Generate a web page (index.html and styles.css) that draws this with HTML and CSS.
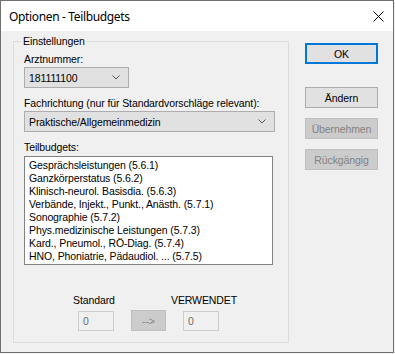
FILE: index.html
```html
<!DOCTYPE html>
<html lang="de">
<head>
    <meta charset="UTF-8">
    <title>Optionen - Teilbudgets</title>
    <link rel="stylesheet" href="styles.css">
</head>
<body>
    <div class="window">
        <div class="titlebar">
            <span class="title">Optionen - Teilbudgets</span>
            <svg class="close" width="11" height="11" viewBox="0 0 11 11">
                <path d="M0.5 0.5 L10.5 10.5 M10.5 0.5 L0.5 10.5" stroke="#000" stroke-width="1" fill="none"/>
            </svg>
        </div>
        <div class="content">
            <div class="group">
                <span class="legend">Einstellungen</span>
                <div class="label">Arztnummer:</div>
                <div class="combo combo-small">
                    <span>181111100</span>
                    <svg width="8" height="5" viewBox="0 0 8 5"><polyline points="0.5,0.5 4,4 7.5,0.5" stroke="#555" fill="none"/></svg>
                </div>
                <div class="label spaced">Fachrichtung (nur für Standardvorschläge relevant):</div>
                <div class="combo combo-wide">
                    <span>Praktische/Allgemeinmedizin</span>
                    <svg width="8" height="5" viewBox="0 0 8 5"><polyline points="0.5,0.5 4,4 7.5,0.5" stroke="#555" fill="none"/></svg>
                </div>
                <div class="label spaced">Teilbudgets:</div>
                <ul class="listbox">
                    <li>Gesprächsleistungen (5.6.1)</li>
                    <li>Ganzkörperstatus (5.6.2)</li>
                    <li>Klinisch-neurol. Basisdia. (5.6.3)</li>
                    <li>Verbände, Injekt., Punkt., Anästh. (5.7.1)</li>
                    <li>Sonographie (5.7.2)</li>
                    <li>Phys.medizinische Leistungen (5.7.3)</li>
                    <li>Kard., Pneumol., RÖ-Diag. (5.7.4)</li>
                    <li>HNO, Phoniatrie, Pädaudiol. ... (5.7.5)</li>
                </ul>
                <div class="bottom-labels">
                    <span class="lbl-standard">Standard</span>
                    <span>VERWENDET</span>
                </div>
                <div class="bottom-controls">
                    <div class="field">0</div>
                    <button class="btn disabled arrow">--&gt;</button>
                    <div class="field">0</div>
                </div>
            </div>
            <div class="buttons">
                <button class="btn default">OK</button>
                <button class="btn first-gap">Ändern</button>
                <button class="btn disabled">Übernehmen</button>
                <button class="btn disabled">Rückgängig</button>
            </div>
        </div>
    </div>
</body>
</html>
```

FILE: styles.css
```css
body {
    margin: 0;
    padding: 0;
    background-color: #f0f0f0;
    font-family: "Liberation Sans", Arial, sans-serif;
    font-size: 10.5px;
    letter-spacing: -0.1px;
    color: #000;
}
.window {
    width: 392px;
    height: 351px;
    border: 1px solid #717171;
    background-color: #f0f0f0;
    display: flex;
    flex-direction: column;
}
.titlebar {
    height: 30px;
    background-color: #fff;
    display: flex;
    align-items: center;
    justify-content: space-between;
    padding: 0 9px 0 8px;
}
.title {
    font-family: "Noto Sans", "Open Sans", sans-serif;
    font-size: 12px;
    letter-spacing: -0.35px;
    padding-top: 1px;
}
.content {
    display: flex;
    padding: 10px 0 0 12px;
}
.group {
    position: relative;
    width: 254px;
    border: 1px solid #dcdcdc;
    padding: 11px 10px 11px 10px;
}
.legend {
    position: absolute;
    top: -7px;
    left: 7px;
    padding: 0 2px;
    background-color: #f0f0f0;
    line-height: 13px;
}
.label {
    line-height: 13px;
    height: 13px;
    white-space: nowrap;
}
.label.spaced {
    margin-top: 9px;
}
.combo {
    margin-top: 1px;
    height: 19px;
    border: 1px solid #adadad;
    background-color: #e1e1e1;
    display: flex;
    align-items: center;
    justify-content: space-between;
    padding: 0 8px 0 4px;
    box-sizing: content-box;
}
.combo-small {
    width: 91px;
}
.combo-wide {
    width: 237px;
}
.listbox {
    list-style: none;
    margin: 2px 0 0 0;
    padding: 2px 0 0 4px;
    width: 243px;
    height: 105px;
    border: 1px solid #828282;
    background-color: #fff;
}
.listbox li {
    line-height: 13px;
    height: 13px;
    white-space: nowrap;
}
.bottom-labels {
    margin-top: 29px;
    padding-left: 49px;
    display: flex;
    line-height: 13px;
    height: 13px;
}
.lbl-standard {
    width: 98px;
}
.bottom-controls {
    margin-top: 3px;
    padding-left: 54px;
    display: flex;
    align-items: center;
    gap: 17px;
    height: 21px;
}
.field {
    width: 30px;
    height: 18px;
    line-height: 18px;
    border: 1px solid #cccccc;
    padding-left: 4px;
    color: #6d6d6d;
    background-color: #f0f0f0;
}
.btn {
    width: 73px;
    height: 21px;
    padding: 0;
    border: 1px solid #adadad;
    background-color: #e1e1e1;
    font-family: "Liberation Sans", Arial, sans-serif;
    font-size: 10.5px;
    letter-spacing: -0.1px;
    color: #000;
    box-sizing: border-box;
}
.btn.default {
    border: 2px solid #0078d7;
}
.btn.disabled {
    background-color: #cccccc;
    border-color: #bfbfbf;
    color: #838383;
}
.btn.arrow {
    width: 35px;
}
.buttons {
    display: flex;
    flex-direction: column;
    margin: 2px 0 0 16px;
    gap: 10px;
}
.buttons .first-gap {
    margin-top: 13px;
}
```
